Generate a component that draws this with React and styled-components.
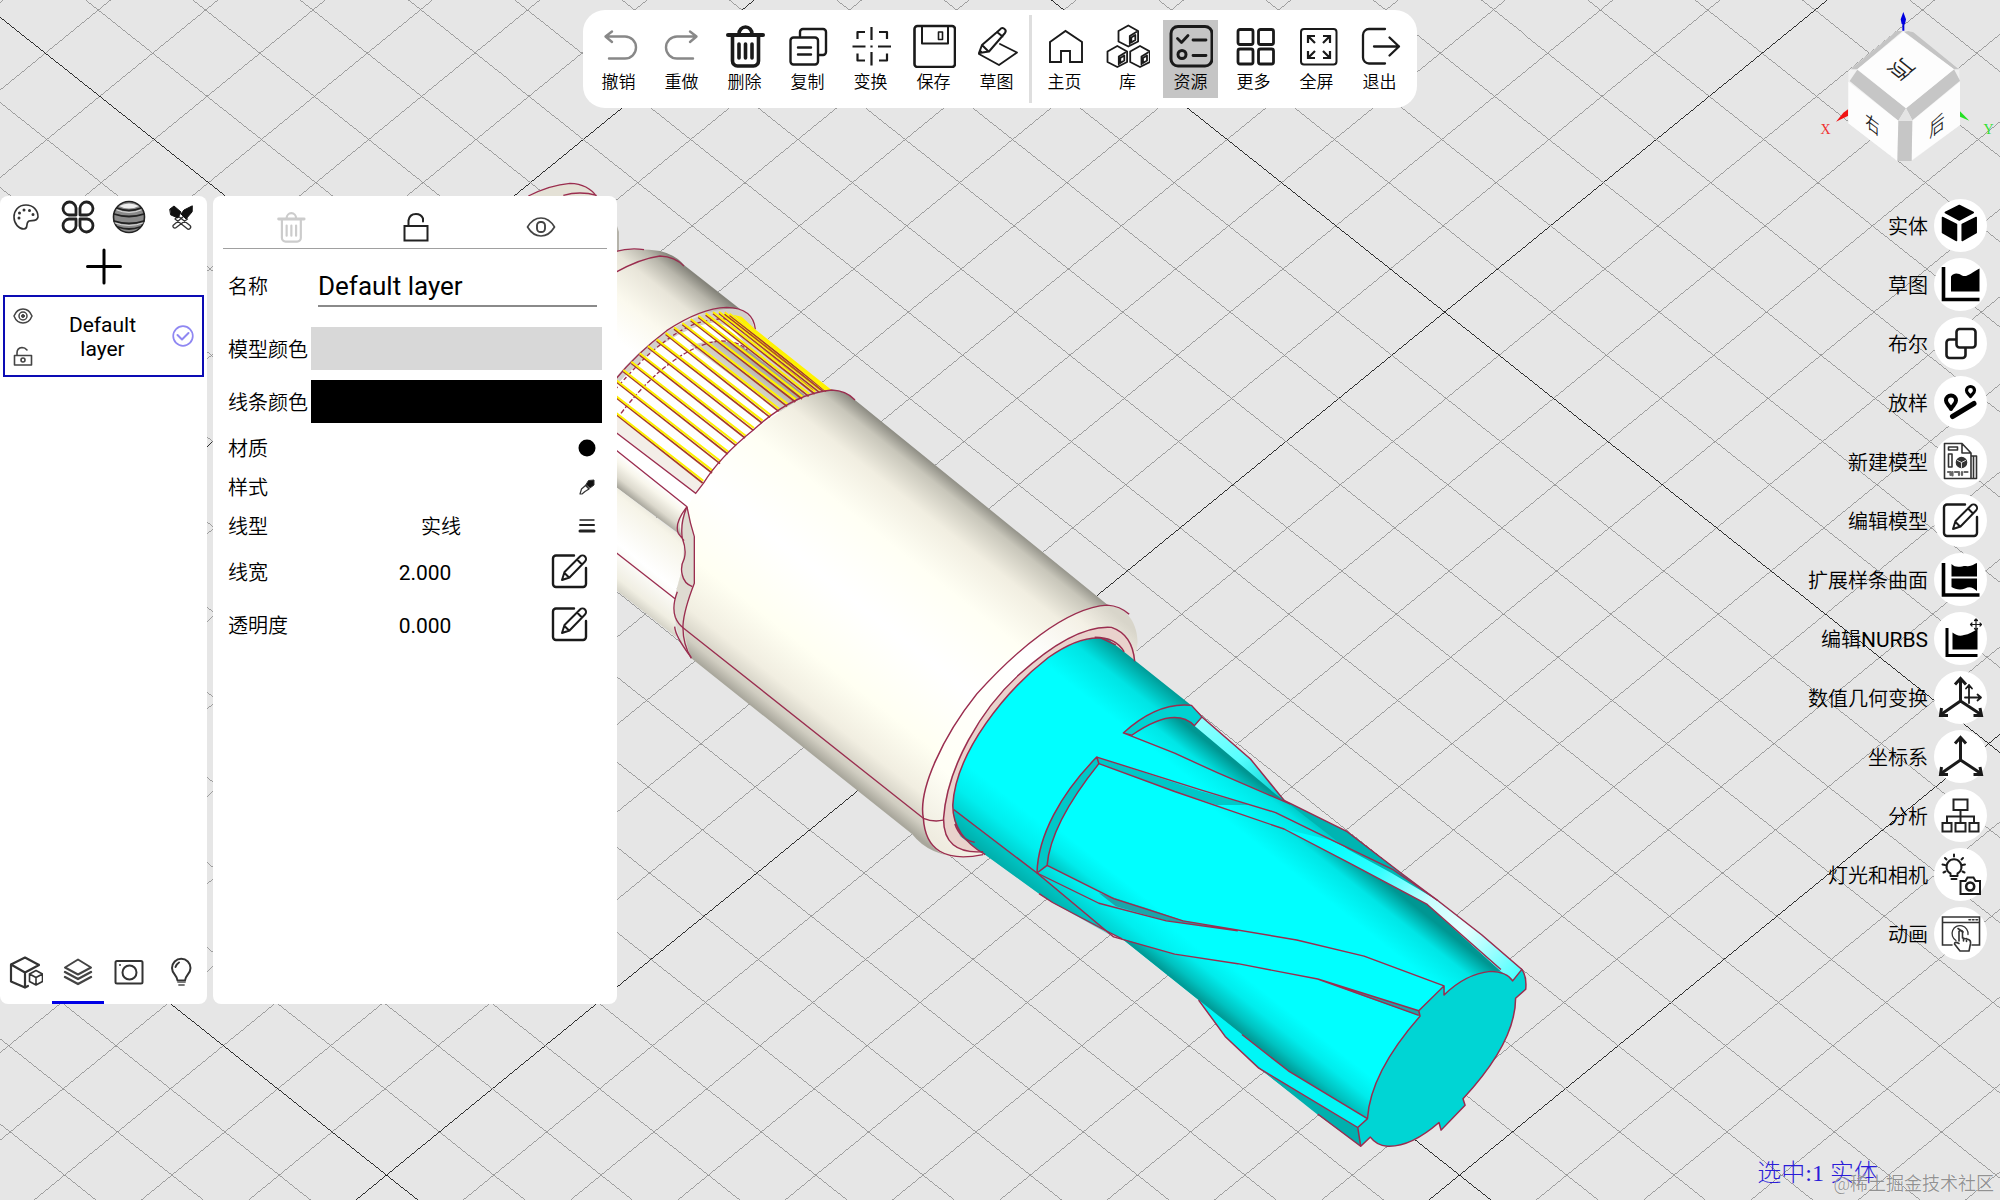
import { useState } from 'react';
import styled, { createGlobalStyle } from 'styled-components';

const GlobalStyle = createGlobalStyle`
	* {
		box-sizing: border-box;
	}
	body {
		margin: 0;
		background-color: #e6e6e6;
		color: #000;
		font-family: Roboto, 'Noto Sans CJK SC', sans-serif;
		font-weight: 350;
	}
	button,
	input {
		font: inherit;
		color: inherit;
	}
	button {
		padding: 0;
		border: none;
		background: none;
		cursor: pointer;
	}
`;

const Screen = styled.div`
	position: relative;
	min-height: 100vh;
	display: flex;
	flex-direction: column;
	padding-top: 10px;
	overflow: hidden;
`;

const Canvas = styled.svg`
	position: absolute;
	inset: 0;
	width: 100%;
	height: 100%;
`;

const ViewCube = styled.svg`
	position: absolute;
	top: 0;
	right: 0;
	width: 200px;
	height: 180px;
`;

const Toolbar = styled.header`
	position: relative;
	align-self: center;
	display: flex;
	gap: 5px;
	padding: 10px 10px 10px 8px;
	border-radius: 22px;
	background-color: #fff;
`;

const ToolGroup = styled.div`
	display: flex;
	gap: 8px;
`;

const Divider = styled.div`
	width: 3px;
	margin: -5px 0;
	background-color: #dedede;
`;

const ToolButton = styled.button`
	width: 55px;
	padding: 4px 0;
	display: flex;
	flex-direction: column;
	align-items: center;
	gap: 2px;
	background-color: ${(props) => (props.$active ? '#c5c5c5' : 'transparent')};
`;

const ToolLabel = styled.span`
	font-size: 17px;
	line-height: 24px;
`;

const Icon = styled.svg`
	display: block;
	width: ${(props) => props.$size}px;
	height: ${(props) => props.$size}px;
	fill: none;
	stroke: ${(props) => props.$color || '#1a1a1a'};
	stroke-width: 2;
	stroke-linecap: round;
	stroke-linejoin: round;
`;

const Body = styled.main`
	position: relative;
	flex: 1;
	display: flex;
	justify-content: space-between;
	margin-top: 88px;
`;

const Panels = styled.div`
	display: flex;
	gap: 6px;
	margin-bottom: 196px;
`;

const LayerPanel = styled.aside`
	width: 207px;
	display: flex;
	flex-direction: column;
	border-radius: 8px;
	background-color: #fff;
`;

const IconRow = styled.div`
	display: grid;
	grid-template-columns: repeat(4, 1fr);
	height: 42px;
`;

const IconButton = styled.button`
	display: flex;
	align-items: center;
	justify-content: center;
`;

const AddButton = styled(IconButton)`
	height: 57px;
`;

const LayerCard = styled.div`
	display: flex;
	align-items: center;
	justify-content: space-between;
	height: 82px;
	margin: 0 3px;
	padding: 0 8px;
	border: 2px solid #0c0cb4;
`;

const LayerFlags = styled.div`
	display: flex;
	flex-direction: column;
	gap: 20px;
`;

const LayerName = styled.span`
	width: 80px;
	padding-top: 2px;
	font-size: 21px;
	line-height: 24px;
	font-weight: 400;
	text-align: center;
`;

const Tabs = styled.nav`
	display: grid;
	grid-template-columns: repeat(4, 1fr);
	height: 62px;
	margin-top: auto;
`;

const Tab = styled(IconButton)`
	border-bottom: 3px solid ${(props) => (props.$active ? '#0000e6' : 'transparent')};
`;

const PropertyPanel = styled.section`
	width: 404px;
	border-radius: 8px;
	background-color: #fff;
`;

const PropertyHeader = styled.div`
	display: grid;
	grid-template-columns: repeat(3, 1fr);
	height: 53px;
	margin: 0 10px;
	padding: 10px 4px 0 6px;
	border-bottom: 1px solid #a0a0a0;
`;

const Row = styled.div`
	display: grid;
	grid-template-columns: 83px 1fr;
	align-items: center;
	height: ${(props) => props.$height}px;
	padding: 0 15px;
`;

const RowLabel = styled.label`
	padding-top: 2px;
	font-size: 20px;
	line-height: 24px;
	white-space: nowrap;
`;

const NameInput = styled.input`
	min-width: 0;
	height: 43px;
	margin: 0 5px 0 7px;
	padding: 2px 0 0;
	border: none;
	border-bottom: 2px solid #8a8a8a;
	background: none;
	font-size: 26px;
	font-weight: 400;
	outline: none;
`;

const Swatch = styled.input`
	width: 100%;
	height: 43px;
	padding: 0;
	border: none;
	background: none;
	appearance: none;

	&::-webkit-color-swatch-wrapper {
		padding: 0;
	}
	&::-webkit-color-swatch {
		border: none;
		border-radius: 0;
	}
`;

const Value = styled.div`
	display: flex;
	align-items: center;
`;

const ValueText = styled.output`
	flex: 1;
	padding-top: 2px;
	font-size: ${(props) => (props.$numeric ? 21 : 20)}px;
	line-height: 24px;
	font-weight: ${(props) => (props.$numeric ? 400 : 350)};
	text-align: center;
`;

const ValueButton = styled(IconButton)`
	width: ${(props) => (props.$wide ? 63 : 31)}px;
`;

const ToolList = styled.nav`
	display: flex;
	flex-direction: column;
	align-items: flex-end;
	gap: 6px;
	padding: 3px 13px 0 0;
`;

const SideTool = styled.button`
	display: flex;
	align-items: center;
	gap: 6px;
`;

const SideLabel = styled.span`
	padding-top: 2px;
	font-size: 20px;
	line-height: 24px;
`;

const Latin = styled.span`
	font-size: 21px;
	font-weight: 400;
`;

const Disc = styled.span`
	border-radius: 50%;
	background-color: #fff;
`;

const Status = styled.p`
	position: absolute;
	right: 122px;
	bottom: 11px;
	margin: 0;
	color: #2a1cd8;
	font-family: 'Liberation Serif', 'Noto Sans CJK SC', serif;
	font-size: 24px;
	line-height: 32px;
	font-weight: 300;
`;

const Watermark = styled.p`
	position: absolute;
	right: 6px;
	bottom: 4px;
	margin: 0;
	color: rgba(110, 110, 110, 0.75);
	font-size: 18px;
	line-height: 24px;
	text-shadow: 0 0 1px #fff;
`;

const penSquare = (
	<>
		<path d='M31 10.5H13a3 3 0 0 0-3 3V39a3 3 0 0 0 3 3h27a3 3 0 0 0 3-3V23' strokeWidth='2.4' />
		<path d='M19 35l2.5-8L37 11.5a3.4 3.4 0 0 1 5 5L26.5 32.5zM34 14.5l5 5M21.5 28l4 4' />
	</>
);

const trash = (
	<>
		<path d='M5 11h35' strokeWidth='4' />
		<path d='M16 10a6.5 7 0 0 1 13 0' />
		<path d='M9.5 12v25a5 5 0 0 0 5 5h16a5 5 0 0 0 5-5V12' />
		<path d='M16 20v14M22.5 20v14M29 20v14' />
	</>
);

const cell = (x, y) => (
	<g transform={`translate(${x} ${y})`}>
		<path d='M0-10.5l9.8 5.5v10.5L0 10.5l-9.8-5V-5z' />
		<path d='M1.5 8V0L8-4M3 1.5l4-2.5v5l-4 2.5z' />
	</g>
);

const toolIcons = {
	undo: <path d='M15 7.5L8.5 12.5L15 18M9 12.5h19a11 11 0 0 1 0 22H12' strokeWidth='2.4' />,
	redo: <path d='M30 7.5L36.5 12.5L30 18M36 12.5H17a11 11 0 0 0 0 22h16' strokeWidth='2.4' />,
	trash: <g strokeWidth='3.6'>{trash}</g>,
	copy: (
		<g strokeWidth='2.4'>
			<path d='M14 12V8a3 3 0 0 1 3-3h20a3 3 0 0 1 3 3v20a3 3 0 0 1-3 3h-4' />
			<rect x='4.5' y='13.5' width='27.5' height='27' rx='3' />
			<path d='M12 23.5h13M12 30.5h13' />
		</g>
	),
	transform: (
		<path
			d='M3.5 22.5h13M29 22.5h13M22.5 3v13M22.5 28v13.5M22.5 21.4v2.2M8.5 15V8h7.5M30 8h8v7M8.5 29.5v7h7.5M30 36.5h8v-7'
			strokeWidth='2.2'
			strokeLinecap='butt'
		/>
	),
	save: (
		<>
			<rect x='2.5' y='2' width='40.5' height='41' rx='3' strokeWidth='2.6' />
			<path d='M10 3v16.5h26V3' />
			<rect x='26.5' y='8' width='4' height='7.5' strokeWidth='1.6' />
		</>
	),
	sketch: (
		<>
			<path d='M4 29l3-8L25 5.5a3 3 0 0 1 5 3.5L14 27.5zM7 21l6 6M22 8l5.5 4.5M4 29l2-1.5' />
			<path d='M25 20l17 8.5L24 41L4 30' strokeWidth='1.8' />
		</>
	),
	home: <path d='M7 18L22.5 7L39 18v20H27V27h-9v11H7z' strokeWidth='1.9' strokeLinejoin='miter' />,
	library: (
		<g strokeWidth='1.8'>
			{cell(22.3, 12)}
			{cell(11.3, 32.5)}
			{cell(34, 32.5)}
		</g>
	),
	resources: (
		<g strokeWidth='3'>
			<rect x='2' y='2.5' width='41' height='39.5' rx='7' />
			<path d='M8.5 14.5l4 4L19 11.5M24 16h13M24 31.5h13' strokeWidth='2.8' />
			<circle cx='13' cy='30.5' r='4' />
		</g>
	),
	more: (
		<g strokeWidth='2.8'>
			<rect x='6' y='5.5' width='15' height='15' rx='2' />
			<rect x='26.5' y='5.5' width='15' height='15' rx='2' />
			<rect x='6' y='25' width='15' height='15' rx='2' />
			<rect x='26.5' y='25' width='15' height='15' rx='2' />
		</g>
	),
	fullscreen: (
		<>
			<rect x='6' y='5' width='35.5' height='35.5' rx='3' />
			<path
				d='M20 19l-6.5-6.5M13 19v-7h7M28 19l6.5-6.5M28 12h7v7M20 27l-6.5 6.5M13 27v7h7M28 27l6.5 6.5M35 27v7h-7'
				strokeWidth='2.2'
				strokeLinecap='butt'
				strokeLinejoin='miter'
			/>
		</>
	),
	exit: <path d='M27 5H11a6 6 0 0 0-6 6v22.5a6 6 0 0 0 6 6h16M16 22.5h25M31.5 13.5l9.5 9l-9.5 9' strokeWidth='2.3' />,
};

const axes = (
	<g strokeWidth='3' strokeLinecap='butt' strokeLinejoin='miter'>
		<path d='M26.5 8v23M26.5 30L7 43.5M26.5 30L47 43.5' />
		<path d='M21 13.5l5.5-6l5.5 6M7.5 37l-1 7.5h7.5M46 37l1.5 7.5h-8' />
	</g>
);

const sideIcons = {
	solid: (
		<path
			d='M25.3 6.5l14 7l-14 7.5l-14-7.5zM8.5 18.5l14 7v16l-14-8zM42.2 18.5l-14 7v16l14-8z'
			fill='#000'
			stroke='#000'
			strokeWidth='1.5'
		/>
	),
	sketch: (
		<>
			<path d='M9.5 9v32.5h36' stroke='#000' strokeWidth='3.6' strokeLinecap='butt' strokeLinejoin='miter' />
			<path d='M17 18.5C20 14 25 15.5 28 17.5C33 20 38 14 45.5 10.5V33.5H17z' fill='#000' stroke='none' />
		</>
	),
	boolean: (
		<g strokeWidth='2.6'>
			<rect x='12.5' y='22.5' width='19' height='18.5' rx='3' />
			<rect x='22.5' y='12' width='19' height='18.5' rx='3' fill='#fff' />
		</g>
	),
	loft: (
		<g stroke='#000'>
			<path d='M17 33c-1.5-3.5-5-5-5-8.5a5 5 0 0 1 10 0c0 3.5-3.5 5-5 8.5z' strokeWidth='4' />
			<path d='M36.5 20.5c-1-2-4-3-4-6a4 4 0 0 1 8 0c0 3-3 4-4 6z' strokeWidth='3.2' />
			<path d='M18.5 40.5L40 27.5' strokeWidth='5' />
		</g>
	),
	newModel: (
		<g strokeWidth='1.6' stroke='#333'>
			<path d='M10.5 8.5H28l9 9.5v25.5H10.5zM28 8.5V18h9M37 21h5.5v22.5H37M39.5 21v22' />
			<rect x='14.5' y='12' width='9' height='3' />
			<rect x='14.5' y='19' width='3.5' height='13' />
			<circle cx='27.5' cy='27.5' r='5' fill='#333' />
			<path d='M27.5 27.5v5M27.5 27.5l-4-2M27.5 27.5l4-2' stroke='#ddd' strokeWidth='1' />
			<path d='M14 37h2.5v3M18.5 37v3.5M21 37h4v3M28 37v3M30.5 37h3' strokeWidth='2.2' stroke='#666' />
		</g>
	),
	editModel: penSquare,
	extendSpline: (
		<>
			<path d='M9.5 10v32h36' stroke='#000' strokeWidth='3.6' strokeLinecap='butt' strokeLinejoin='miter' />
			<path
				d='M17.5 11C22 16 29 12.5 32 13C37 14 40 11 43 10V23.5H17.5zM17.5 25.5H43V38C39 35 36 33 31 35.5C26 37.5 21 36 17.5 34z'
				fill='#000'
				stroke='none'
			/>
		</>
	),
	editNurbs: (
		<>
			<path d='M13 16v27.5h30.5' stroke='#000' strokeWidth='3' strokeLinecap='butt' strokeLinejoin='miter' />
			<path d='M18.5 20.5C22 23.5 26 24.5 30 23C35 22.5 39 19.5 43.5 17V37.5H18.5z' fill='#000' stroke='none' />
			<path
				d='M42 7v11M36.5 12.5h11M40.5 8.5L42 7l1.5 1.5M40.5 16.5L42 18l1.5-1.5M38 11l-1.5 1.5L38 14M46 11l1.5 1.5L46 14'
				strokeWidth='1.2'
			/>
		</>
	),
	numericTransform: (
		<>
			{axes}
			<path d='M35 32V14M31 26.5h15.5M32 17.5l3-3.5l3 3.5M43.5 23.5l3.5 3l-3.5 3' strokeWidth='1.8' />
		</>
	),
	coordinates: axes,
	analysis: (
		<g strokeLinejoin='miter' stroke='#222'>
			<rect x='19.5' y='10.5' width='14' height='10.5' />
			<rect x='8.5' y='34' width='9' height='8.5' />
			<rect x='21.5' y='34' width='10' height='8.5' />
			<rect x='35.5' y='34' width='9' height='8.5' />
			<path d='M26.5 21v13M13 34v-6.5h27V34' />
		</g>
	),
	lightCamera: (
		<>
			<path d='M16.5 25.5a7.5 7.5 0 1 1 7 0v2.5h-7zM17.5 31h5M20 6.5v2M11 10l1.5 1.5M29 10l-1.5 1.5M8.5 16.5l2.5.5M31 16.5l-2.5.5M9.5 24.5l2-1M30.5 24.5l-2-1' />
			<path d='M26.5 33h5l2-3.5h6l2 3.5h4.5v13h-19.5z' fill='#fff' strokeLinejoin='miter' />
			<circle cx='36.2' cy='38.5' r='4' strokeWidth='2.6' />
		</>
	),
	animation: (
		<g stroke='#333' strokeWidth='1.6'>
			<path d='M18 38H8.5V10h37v28H38M8.5 15.5h37M35 12.8h1.5M38.5 12.8H40M42 12.8h1.5' strokeLinejoin='miter' />
			<path d='M22 33.5a8 8 0 1 1 12-6' strokeWidth='1.3' />
			<path
				d='M25 34V24.5a2 2 0 0 1 3.5 0v6.5l6 1.5q2.5 1 2 4l-1.5 7.5h-9L20.5 37q0-3 4.5-.5M29.5 31v3M32.5 31.5v3'
				fill='#fff'
			/>
			<path d='M24 21.5l5 3.5' />
		</g>
	),
};

const tools = [
	{ icon: 'undo', label: '撤销', muted: true },
	{ icon: 'redo', label: '重做', muted: true },
	{ icon: 'trash', label: '删除' },
	{ icon: 'copy', label: '复制' },
	{ icon: 'transform', label: '变换' },
	{ icon: 'save', label: '保存' },
	{ icon: 'sketch', label: '草图' },
];

const pages = [
	{ icon: 'home', label: '主页' },
	{ icon: 'library', label: '库' },
	{ icon: 'resources', label: '资源', active: true },
	{ icon: 'more', label: '更多' },
	{ icon: 'fullscreen', label: '全屏' },
	{ icon: 'exit', label: '退出' },
];

const sideTools = [
	{ icon: 'solid', label: '实体' },
	{ icon: 'sketch', label: '草图' },
	{ icon: 'boolean', label: '布尔' },
	{ icon: 'loft', label: '放样' },
	{ icon: 'newModel', label: '新建模型' },
	{ icon: 'editModel', label: '编辑模型' },
	{ icon: 'extendSpline', label: '扩展样条曲面' },
	{ icon: 'editNurbs', label: '编辑', latin: 'NURBS' },
	{ icon: 'numericTransform', label: '数值几何变换' },
	{ icon: 'coordinates', label: '坐标系' },
	{ icon: 'analysis', label: '分析' },
	{ icon: 'lightCamera', label: '灯光和相机' },
	{ icon: 'animation', label: '动画' },
];

// ground grid: two families of parallel lines, every tenth one is dark
const ORIGIN = { x: 1444.7, y: 312.1 };
const STEP_A = { x: 54.39, y: 43.15 };
const STEP_B = { x: 52.91, y: -43.15 };

const gridLines = (step, dir) => {
	const lines = [];
	for (let i = -45; i <= 45; i++) {
		const x = ORIGIN.x + step.x * i;
		const y = ORIGIN.y + step.y * i;
		lines.push({
			key: i,
			major: i % 10 === 0,
			x1: x - dir.x * 50,
			y1: y - dir.y * 50,
			x2: x + dir.x * 50,
			y2: y + dir.y * 50,
		});
	}
	return lines;
};

const Grid = () => (
	<g shapeRendering='crispEdges' strokeWidth='0.8'>
		{[gridLines(STEP_A, STEP_B), gridLines(STEP_B, STEP_A)].map((family, f) =>
			family.map(({ key, major, ...ends }) => <line key={`${f}-${key}`} {...ends} stroke={major ? '#000' : '#8c8c8c'} />)
		)}
	</g>
);

const threads = [
	[292, 730, 550, 935],
	[292, 680, 578, 905],
	[292, 632, 602, 877],
	[318, 605, 625, 848],
	[342, 580, 650, 823],
	[367, 555, 677, 800],
	[392, 533, 702, 777],
	[418, 513, 728, 755],
	[445, 493, 752, 738],
	[470, 477, 778, 720],
	[495, 464, 803, 705],
	[520, 452, 828, 692],
	[543, 442, 848, 683],
	[565, 435, 868, 675],
	[587, 431, 886, 668],
	[605, 430, 900, 663],
	[622, 432, 912, 661],
	[637, 436, 920, 660],
];

const Gradient = ({ id, from, to, list }) => (
	<linearGradient id={id} gradientUnits='userSpaceOnUse' x1={from[0]} y1={from[1]} x2={to[0]} y2={to[1]}>
		{list.map(([offset, color]) => (
			<stop key={offset} offset={offset} stopColor={color} />
		))}
	</linearGradient>
);

const Holder = () => (
	<>
		<defs>
			<Gradient
				id='body'
				from={[880, 807]}
				to={[1068.5, 569.3]}
				list={[
					[0, '#a9a79c'],
					[0.04, '#d0cdc1'],
					[0.12, '#f1eee1'],
					[0.26, '#fffff2'],
					[0.48, '#ffffff'],
					[0.7, '#fffff4'],
					[0.85, '#f1eee1'],
					[0.95, '#c8c6ba'],
					[1, '#8b8a81'],
				]}
			/>
			<Gradient
				id='neck'
				from={[710, 287]}
				to={[648, 365]}
				list={[
					[0, '#85847b'],
					[0.12, '#b8b6ab'],
					[0.32, '#e8e5d9'],
					[0.65, '#fbf9ee'],
					[1, '#ffffff'],
				]}
			/>
			<Gradient
				id='arm'
				from={[630, 498]}
				to={[648, 475]}
				list={[
					[0, '#a3a197'],
					[0.3, '#dcd9cd'],
					[0.7, '#f8f6ec'],
					[1, '#ffffff'],
				]}
			/>
			<Gradient
				id='lowerArm'
				from={[640, 617]}
				to={[708, 531]}
				list={[
					[0, '#c3c1b6'],
					[0.15, '#f0eee2'],
					[0.4, '#ffffff'],
					[0.75, '#f6f4e8'],
					[1, '#d0cdc1'],
				]}
			/>
			<Gradient
				id='groove'
				from={[745, 340]}
				to={[690, 410]}
				list={[
					[0, '#8f8d85'],
					[0.3, '#cfccc4'],
					[0.7, '#efe9e2'],
					[1, '#ffffff'],
				]}
			/>
			<Gradient
				id='rim'
				from={[100, 700]}
				to={[600, 180]}
				list={[
					[0, '#efece0'],
					[0.2, '#fffff6'],
					[0.7, '#ffffff'],
					[0.9, '#f4f1e6'],
					[1, '#d8d5ca'],
				]}
			/>
		</defs>
		<path d='M528 197Q548 184 570 183Q590 184 598 197z' fill='#e4e1d6' />
		<path d='M617 226L619 232V252H617z' fill='#b5b3aa' />
		<path d='M612 252Q636 247 660 251Q676 255 684 265L740 309L720 350L612 390z' fill='url(#neck)' />
		<path d='M612 378L700 320L755 330L832 391L696 494L612 432z' fill='#fff' />
		<path d='M612 382Q650 335 690 320Q720 306 740 309Q752 316 755 330L832 391L790 402L748 349Q735 326 715 322Q665 330 612 390z' fill='#d3d0cb' />
		<path d='M700 343Q728 337 748 350L806 396L780 412L690 345z' fill='url(#groove)' />
		<path d='M612 412L704 481L696 494L612 430z' fill='#f3eee8' />
		<path d='M612 430L696 494L688 507L680 530L612 480z' fill='#fff' />
		<path d='M612 447L687 507Q676 524 682 536L612 484z' fill='url(#arm)' />
		<path d='M612 484L683 538L684 565Q675 590 674 605L676 637L612 587z' fill='url(#lowerArm)' />
		<path
			d='M696 493Q704 484 717 467Q733 449 753 432Q777 412 807 395Q818 390 832 390Q846 391 855 400L1109 606Q1126 618 1124 660L965 857Q930 857 912 834L691 658Q676 640 674 605Q677 586 682 570L684 545L687 507z'
			fill='url(#body)'
		/>
		<path d='M687 507L694 537V583L686 608Q681 630 691 658Q676 640 674 605Q677 586 682 570L684 545Q676 525 687 507z' fill='#dedbd1' />
		<g transform='translate(520 170) scale(0.333333)' fill='none' stroke='#9a2d4f' strokeWidth='4'>
			<path d='M25 78Q90 45 150 40Q205 42 230 80M130 76Q180 62 230 76' />
			<path d='M285 245Q330 232 372 239M285 308Q360 266 420 258Q465 260 492 288' />
			<path d='M285 630Q350 550 440 482Q540 415 620 412Q700 414 706 478' />
			<path d='M303 730Q380 630 450 580Q530 520 600 513Q655 512 682 540' strokeDasharray='14 6' />
			<path d='M285 660Q420 500 530 460Q600 440 640 450' strokeDasharray='12 8' />
			{threads.map(([x1, y1, x2, y2]) => (
				<g key={y2 + x2}>
					<line x1={x1 - 8} y1={y1} x2={x2 - 2} y2={y2 + 4} stroke='#a63c2c' strokeWidth='5' />
					<line x1={x1 - 8} y1={y1 - 5} x2={x2} y2={y2 - 3} stroke='#fff200' strokeWidth='6' />
				</g>
			))}
			<path d='M640 434L665 440L708 480L935 660L915 662z' fill='#fff200' stroke='none' />
			<path d='M672 490L880 660M690 490L900 660' stroke='#c07a10' strokeWidth='2' />
			<path d='M285 785L527 970L550 940Q600 860 700 780Q820 670 935 660Q980 662 1005 690M285 838L501 1010' />
			<path d='M501 1010Q462 1060 475 1090L492 1112M501 1010Q480 1060 487 1105Q500 1140 493 1165Q480 1190 487 1215Q492 1240 517 1250' />
			<path d='M501 1010Q510 1060 523 1100V1240Q492 1320 489 1365Q487 1420 514 1465' />
			<path d='M285 1145L466 1287M472 1265Q455 1310 466 1342Q474 1362 490 1374L1210 1945M464 1370Q466 1400 514 1463' />
		</g>
	</>
);

const Cutter = () => (
	<>
		<defs>
			<Gradient
				id='shaft'
				from={[380, 880]}
				to={[783, 418]}
				list={[
					[0, '#00aaa6'],
					[0.05, '#00cccb'],
					[0.14, '#00eeee'],
					[0.24, '#00ffff'],
					[0.76, '#00ffff'],
					[0.9, '#00e4e4'],
					[1, '#009c98'],
				]}
			/>
			<Gradient
				id='flute'
				from={[412, 843]}
				to={[752, 453]}
				list={[
					[0, '#009c98'],
					[0.05, '#00c2c0'],
					[0.13, '#00ecec'],
					[0.22, '#00ffff'],
					[0.76, '#00ffff'],
					[0.9, '#00e6e6'],
					[1, '#009692'],
				]}
			/>
			<Gradient
				id='glint'
				from={[1060, 740]}
				to={[1510, 1090]}
				list={[
					[0, '#00ffff'],
					[0.25, '#30ffff'],
					[0.5, '#c8ffff'],
					[0.7, '#e6ffff'],
					[1, '#50ffff'],
				]}
			/>
			<Gradient
				id='glintBack'
				from={[755, 420]}
				to={[950, 620]}
				list={[
					[0, '#90ffff'],
					[0.5, '#58ffff'],
					[1, '#00d0d0'],
				]}
			/>
		</defs>
		<g transform='translate(880 560) scale(0.42092 0.38265)' fill='none' stroke='#9a2d4f' strokeWidth='3.6' strokeLinejoin='round'>
			<g stroke='none'>
				<path
					d='M103 675C90 600 150 460 230 350C320 240 440 125 540 118C590 122 612 170 612 215L606 265L250 770Q220 780 190 778Q108 775 103 675z'
					fill='url(#rim)'
				/>
				<path d='M151 680C150 560 230 400 330 300C430 200 500 172 550 176Q600 190 606 265L250 764Q160 778 151 680z' fill='#e9d2cc' />
				<path
					d='M173 640C180 500 300 340 400 255Q480 195 540 205L605 262L740 380L765 410L880 520L960 628L1110 710L1240 820L1325 890L1430 980L1525 1070L1503 1100L1200 1450L1142 1532L1050 1455L900 1328L820 1245L757 1150L575 990L530 965L410 895L378 872L250 770L195 725Q172 690 173 640z'
					fill='url(#shaft)'
				/>
				<path d='M598 458Q650 410 700 409Q730 415 747 433L960 625L965 632L800 555z' fill='url(#flute)' />
				<path
					d='M520 532L700 605L960 703L1120 795L1300 900L1475 1075Q1400 1080 1340 1135V1113L1150 1035L990 993L720 943L555 885L397 798Q405 690 520 532z'
					fill='url(#flute)'
				/>
				<path
					d='M575 990L700 1030L850 1055L1040 1095L1283 1192Q1170 1340 1158 1460L970 1335L860 1240L757 1150z'
					fill='url(#flute)'
				/>
				<path d='M765 410L880 520L962 630L940 612L747 433z' fill='url(#glintBack)' />
				<path d='M1070 732L1220 810L1325 890L1430 980L1525 1070L1503 1100L1475 1075L1300 900L1120 795L960 703z' fill='url(#glint)' />
				<path d='M1110 710L1240 820L1325 890L1215 818L1110 755L965 632z' fill='#00b4b2' />
				<path d='M515 515L760 604L880 640L800 640L700 605L520 532Q405 690 397 798L373 818C375 720 430 610 515 515z' fill='#00c8c8' />
				<path d='M578 452Q660 370 740 380L765 410L747 433Q700 380 598 458z' fill='#00d2d2' />
				<path d='M520 870L640 912L720 942L850 969L680 943L560 905zM1040 1095L1280 1178L1283 1192L1150 1140z' fill='#1aa6aa' />
				<path d='M757 1150L860 1240L970 1335L1158 1460L1135 1483L1000 1410L915 1340L820 1245z' fill='#00f6f6' />
				<path d='M915 1340L1135 1483L1142 1532L1040 1450z' fill='#00b0ae' />
				<path d='M378 872L250 770L190 722L175 652L373 818L555 985L410 895z' fill='#00b4b2' opacity='0.5' />
			</g>
			<path
				d='M1280 1178L1340 1113V1137Q1390 1082 1450 1075Q1490 1076 1503 1100L1525 1070Q1537 1090 1534 1122L1510 1145Q1510 1260 1385 1408L1390 1425L1333 1490L1328 1470Q1260 1535 1205 1532Q1180 1530 1165 1508L1142 1532L1135 1483L1158 1460Q1165 1340 1283 1192z'
				fill='#00d5d4'
			/>
			<path d='M103 675Q127 686 150 680M245 770Q110 800 103 675C90 600 150 460 230 350C320 240 440 125 540 118Q570 120 592 142' />
			<path d='M245 762Q150 770 151 675C160 540 240 390 330 300C430 200 500 172 550 176Q600 195 605 265M225 738Q190 730 178 690M510 202Q560 202 580 240' />
			<path d='M250 770Q172 720 173 640C180 500 300 340 400 255Q470 200 525 204L560 222' />
			<path d='M175 652L373 818L555 985L700 1030L850 1055L1040 1095L1280 1190M1040 1095L1280 1178' />
			<path d='M373 818C375 720 430 610 515 515L520 532Q405 690 397 798L373 818L520 897L680 943L850 969M397 798L555 885L720 943L990 993L1150 1035L1340 1113' />
			<path d='M515 515L760 600L940 660L1070 730L1220 810L1325 890M520 532L700 605L960 703L1120 795L1300 900L1475 1070' />
			<path d='M598 458L578 452Q660 370 740 380L765 410L747 433Q700 380 598 458M578 452L700 505L800 555L975 638' />
			<path d='M765 410L880 520L960 628L1110 710L1240 820L1325 890L1430 980L1525 1070' />
			<path d='M378 872L410 895L530 965L575 990M757 1150L820 1245L900 1328L1135 1483M860 1240L970 1335L1158 1460M1142 1532L1040 1448' />
		</g>
	</>
);

const Cube = () => (
	<ViewCube viewBox='0 0 600 540' aria-label='视图方向'>
		<path d='M310 36L318 58L315 72H305L302 58zM307 70H313V93H307z' fill='#0000e0' />
		<path d='M108 365L130 338L145 327V347z' fill='#f01414' />
		<path d='M508 362L480 334V350z' fill='#22e022' />
		<path d='M290 92H330L478 207L480 375L335 483H292L145 370V212z' fill='#f1f1f1' />
		<path d='M290 93H308L172 208H152zM325 93L340 97L477 208H462L312 95z' fill='#c4c4c4' />
		<path d='M172 209L318 325L295 362L149 243zM462 208L480 242L337 361L318 325z' fill='#c6c6c6' />
		<path d='M310 95L462 208L318 325L172 208z' fill='#fdfdfd' />
		<path d='M145 245L295 362L292 483L145 370zM337 362L480 245V375L335 481z' fill='#fdfdfd' />
		<path d='M295 362H337L335 483H292z' fill='#c6c6c6' />
		<path d='M318 325L338 362H295z' fill='#e4e4e4' />
		<g fontFamily="'Noto Sans CJK SC', sans-serif" textAnchor='middle' fill='#222'>
			<text transform='matrix(-0.79 0.63 -0.78 -0.62 305 207)' y='24' fontSize='66'>
				顶
			</text>
			<text transform='matrix(0.79 0.6 0 1 217 373)' y='20' fontSize='54'>
				右
			</text>
			<text transform='matrix(0.79 -0.6 0 1 411 375)' y='22' fontSize='58'>
				后
			</text>
		</g>
		<g fontFamily="'Liberation Serif', serif" fontWeight='400' fontSize='42' textAnchor='middle'>
			<text x='77' y='402' fill='#f03030'>
				X
			</text>
			<text x='566' y='402' fill='#30e030'>
				Y
			</text>
		</g>
	</ViewCube>
);

const ToolItem = ({ icon, label, muted, active }) => (
	<ToolButton $active={active}>
		<Icon viewBox='0 0 44 44' $size={44} $color={muted ? '#888' : undefined}>
			{toolIcons[icon]}
		</Icon>
		<ToolLabel>{label}</ToolLabel>
	</ToolButton>
);

const EditButton = ({ label }) => (
	<ValueButton $wide aria-label={label}>
		<Icon viewBox='1 0 53 53' $size={53}>
			{penSquare}
		</Icon>
	</ValueButton>
);

const App = () => {
	const [name, setName] = useState('Default layer');
	const [modelColor, setModelColor] = useState('#d8d8d8');
	const [lineColor, setLineColor] = useState('#000000');

	return (
		<Screen>
			<GlobalStyle />
			<Canvas viewBox='0 0 2000 1200' preserveAspectRatio='xMidYMid slice'>
				<Grid />
				<Holder />
				<Cutter />
			</Canvas>
			<Cube />
			<Toolbar>
				<ToolGroup>
					{tools.map((tool) => (
						<ToolItem key={tool.icon} {...tool} />
					))}
				</ToolGroup>
				<Divider />
				<ToolGroup>
					{pages.map((page) => (
						<ToolItem key={page.icon} {...page} />
					))}
				</ToolGroup>
			</Toolbar>
			<Body>
				<Panels>
					<LayerPanel>
						<IconRow>
							<IconButton aria-label='颜色'>
								<Icon viewBox='0 0 32 32' $size={32} $color='#333'>
									<path d='M16 4C8 4 4 10 4 16c0 7 5 12 10 12c5 0 1-6 5-8c3-1 8 1 9-4C28 9 23 4 16 4z' strokeWidth='1.6' />
									<path d='M9 17v.1M9.5 12v.1M14 9v.1M19.5 9.5v.1M23 13.5v.1' strokeWidth='3' />
								</Icon>
							</IconButton>
							<IconButton aria-label='材质'>
								<Icon viewBox='0 0 36 36' $size={36} $color='#222'>
									<path
										d='M16 16V9a6.5 6.5 0 1 0-7 7zM20 16V9a6.5 6.5 0 1 1 7 7zM16 20v7a6.5 6.5 0 1 1-7-7zM20 20v7a6.5 6.5 0 1 0 7-7z'
										strokeWidth='2.8'
									/>
								</Icon>
							</IconButton>
							<IconButton aria-label='纹理'>
								<Icon viewBox='0 0 36 36' $size={36} $color='#222'>
									<circle cx='18' cy='18' r='15.5' fill='#8a8a8a' strokeWidth='1.6' />
									<path d='M8 7Q18 2 28 7Q18 12 8 7z' fill='#eee' stroke='none' />
									<path d='M6 9Q18 14 30 9M3 15Q18 20 33 15M3 22Q18 27 33 22M7 28Q18 32 29 28' strokeWidth='1.8' />
									<path d='M6 11Q18 16 30 11M4 24Q18 29 32 24' stroke='#ddd' strokeWidth='1' />
								</Icon>
							</IconButton>
							<IconButton aria-label='画笔'>
								<Icon viewBox='0 0 32 32' $size={32} $color='#333'>
									<path d='M13 15L25 24.5a2 2 0 0 1-3 3L10 18zM19 15L8 24.5a2 2 0 0 0 2.5 2.5L22.5 18' strokeWidth='1.3' />
									<path d='M5 8l4-3l7 6l-3 6l-7-3zM27 5l-8 4l-3 4l5 5l6-7z' fill='#111' stroke='#111' strokeWidth='1' />
								</Icon>
							</IconButton>
						</IconRow>
						<AddButton aria-label='新建图层'>
							<Icon viewBox='0 0 40 40' $size={40} $color='#000'>
								<path d='M20 3v33M3.5 19.5h33' strokeWidth='3' />
							</Icon>
						</AddButton>
						<LayerCard>
							<LayerFlags>
								<Icon viewBox='0 0 20 20' $size={20} $color='#444'>
									<path d='M1 10C3 5 6 3 10 3s7 2 9 7c-2 5-5 7-9 7s-7-2-9-7z' strokeWidth='1.5' />
									<circle cx='10' cy='10' r='4' strokeWidth='1.5' />
									<circle cx='10' cy='10' r='1.5' fill='#444' strokeWidth='1' />
								</Icon>
								<Icon viewBox='0 0 20 20' $size={20} $color='#444'>
									<path d='M1.5 9.5h17V19h-17zM4 9V7q0-5 5-5.5q3 0 5 2.5' strokeWidth='1.6' />
									<circle cx='10' cy='14' r='2' strokeWidth='1.6' />
								</Icon>
							</LayerFlags>
							<LayerName>{name}</LayerName>
							<Icon viewBox='0 0 22 22' $size={22} $color='#8f87f2'>
								<circle cx='11' cy='11' r='9.8' strokeWidth='1.7' />
								<path d='M5.5 10l4.5 4.5l6.5-6.5' />
							</Icon>
						</LayerCard>
						<Tabs>
							<Tab aria-label='模型'>
								<Icon viewBox='0 0 34 34' $size={34} $color='#333'>
									<path d='M30 10L16 2.5L2 9.5v17L16 32.5V17.5L2 9.5M16 17.5L30 10M16 32.5L19 31' strokeWidth='2.2' />
									<path d='M27 15.5l6.5 3.5v7.5L27 30l-6.5-3.5V19zM20.5 19l6.5 3.5l6.5-3.5M27 22.5V30' strokeWidth='1.6' />
								</Icon>
							</Tab>
							<Tab $active aria-label='图层'>
								<Icon viewBox='0 0 32 32' $size={32} $color='#444'>
									<path d='M16 3.5L29 11.5L16 18.5L3 11.5z' />
									<path d='M3 16L16 23L29 16M3 21L16 28L29 21' strokeWidth='2.4' />
								</Icon>
							</Tab>
							<Tab aria-label='相机'>
								<Icon viewBox='0 0 32 32' $size={32} $color='#333'>
									<rect x='2.5' y='5' width='27' height='22.5' rx='1.5' />
									<circle cx='16.5' cy='16.5' r='7' />
									<path d='M7 9v.1' />
								</Icon>
							</Tab>
							<Tab aria-label='灯光'>
								<Icon viewBox='0 0 32 32' $size={32} $color='#333'>
									<path d='M12.5 24.5C12 19 7 18 7 12a9.2 9.2 0 0 1 18.5 0c0 6-5 7-5.5 12.5zM10.5 11q1-3 3.5-4.5' />
									<path d='M13 26h7M14 29h5' strokeWidth='1.8' stroke='#777' />
								</Icon>
							</Tab>
						</Tabs>
					</LayerPanel>
					<PropertyPanel>
						<PropertyHeader>
							<IconButton aria-label='删除图层' disabled>
								<Icon viewBox='0 0 44 44' $size={32} $color='#ccc'>
									<g strokeWidth='3'>{trash}</g>
								</Icon>
							</IconButton>
							<IconButton aria-label='锁定'>
								<Icon viewBox='0 0 30 32' $size={32} $color='#222'>
									<path d='M3.5 15h23v14.5h-23zM7.5 15V9.5q1-6.5 7.5-6.5q5 0 7 4.5v3' strokeLinejoin='miter' />
								</Icon>
							</IconButton>
							<IconButton aria-label='显示'>
								<Icon viewBox='0 0 32 32' $size={32} $color='#444'>
									<path d='M2.5 16Q8 7 16 7t13.5 9Q24 25 16 25T2.5 16z' strokeWidth='1.7' />
									<rect x='12' y='11' width='8' height='10' rx='3.5' strokeWidth='1.9' />
								</Icon>
							</IconButton>
						</PropertyHeader>
						<Row $height={73}>
							<RowLabel htmlFor='layer-name'>名称</RowLabel>
							<NameInput id='layer-name' value={name} onChange={(e) => setName(e.target.value)} />
						</Row>
						<Row $height={53}>
							<RowLabel htmlFor='model-color'>模型颜色</RowLabel>
							<Swatch id='model-color' type='color' value={modelColor} onChange={(e) => setModelColor(e.target.value)} />
						</Row>
						<Row $height={53}>
							<RowLabel htmlFor='line-color'>线条颜色</RowLabel>
							<Swatch id='line-color' type='color' value={lineColor} onChange={(e) => setLineColor(e.target.value)} />
						</Row>
						<Row $height={39}>
							<RowLabel as='span'>材质</RowLabel>
							<Value>
								<ValueText />
								<ValueButton aria-label='材质'>
									<Icon viewBox='0 0 18 18' $size={18}>
										<circle cx='9' cy='9' r='8.5' fill='#000' stroke='none' />
									</Icon>
								</ValueButton>
							</Value>
						</Row>
						<Row $height={39}>
							<RowLabel as='span'>样式</RowLabel>
							<Value>
								<ValueText />
								<ValueButton aria-label='样式'>
									<Icon viewBox='0 0 18 18' $size={18} $color='#333'>
										<path d='M2 16l1.5-5l4-3.5l3.5 3.5l-4 2.5L4 16z' strokeWidth='1.2' />
										<path d='M8 6.5l2.5-4l5.5-.5v5L12 10z' fill='#111' strokeWidth='1' />
									</Icon>
								</ValueButton>
							</Value>
						</Row>
						<Row $height={39}>
							<RowLabel htmlFor='line-type'>线型</RowLabel>
							<Value>
								<ValueText id='line-type'>实线</ValueText>
								<ValueButton aria-label='线型'>
									<Icon viewBox='0 0 18 18' $size={18} $color='#222'>
										<path d='M2 3h14' strokeWidth='1.3' />
										<path d='M2 8h14' />
										<path d='M2 14h14' strokeWidth='3' />
									</Icon>
								</ValueButton>
							</Value>
						</Row>
						<Row $height={53}>
							<RowLabel htmlFor='line-width'>线宽</RowLabel>
							<Value>
								<ValueText id='line-width' $numeric>
									2.000
								</ValueText>
								<EditButton label='编辑线宽' />
							</Value>
						</Row>
						<Row $height={53}>
							<RowLabel htmlFor='opacity'>透明度</RowLabel>
							<Value>
								<ValueText id='opacity' $numeric>
									0.000
								</ValueText>
								<EditButton label='编辑透明度' />
							</Value>
						</Row>
					</PropertyPanel>
				</Panels>
				<ToolList>
					{sideTools.map(({ icon, label, latin }) => (
						<SideTool key={icon}>
							<SideLabel>
								{label}
								{latin && <Latin>{latin}</Latin>}
							</SideLabel>
							<Disc>
								<Icon viewBox='0 0 53 53' $size={53}>
									{sideIcons[icon]}
								</Icon>
							</Disc>
						</SideTool>
					))}
				</ToolList>
			</Body>
			<Status>选中:1 实体</Status>
			<Watermark>@稀土掘金技术社区</Watermark>
		</Screen>
	);
};

export default App;
